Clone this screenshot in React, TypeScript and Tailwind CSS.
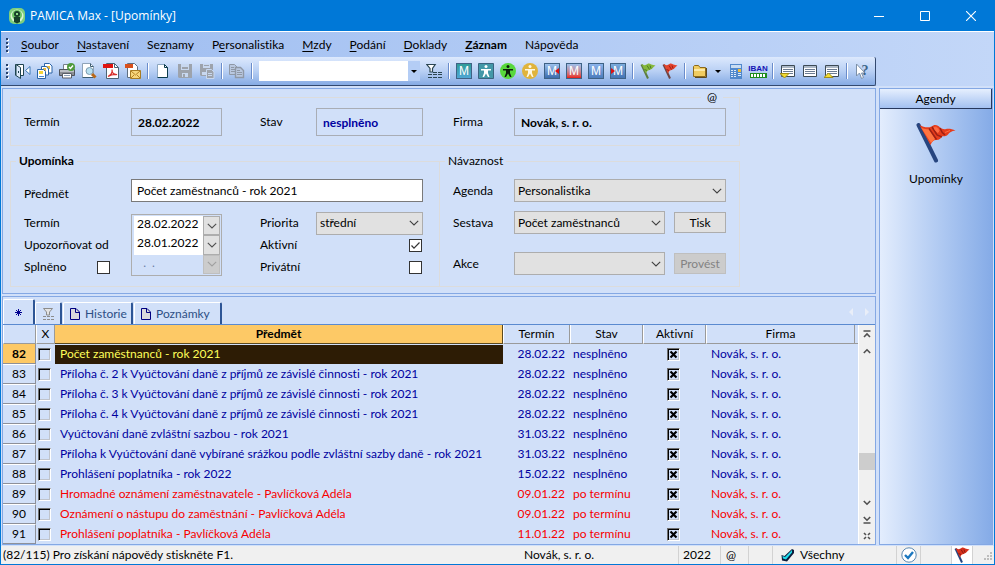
import type { ReactNode } from "react";

type MenuItem = { before?: string; key: string; after: string; bold?: boolean };

const menu: MenuItem[] = [
  { key: "S", after: "oubor" },
  { key: "N", after: "astavení" },
  { before: "Se", key: "z", after: "namy" },
  { before: "P", key: "e", after: "rsonalistika" },
  { key: "M", after: "zdy" },
  { key: "P", after: "odání" },
  { key: "D", after: "oklady" },
  { key: "Z", after: "áznam", bold: true },
  { before: "Náp", key: "o", after: "věda" },
];

type Row = { id: number; subject: string; date: string; late?: boolean };

const rows: Row[] = [
  { id: 82, subject: "Počet zaměstnanců - rok 2021", date: "28.02.22" },
  { id: 83, subject: "Příloha č. 2 k Vyúčtování daně z příjmů ze závislé činnosti - rok 2021", date: "28.02.22" },
  { id: 84, subject: "Příloha č. 3 k Vyúčtování daně z příjmů ze závislé činnosti - rok 2021", date: "28.02.22" },
  { id: 85, subject: "Příloha č. 4 k Vyúčtování daně z příjmů ze závislé činnosti - rok 2021", date: "28.02.22" },
  { id: 86, subject: "Vyúčtování daně zvláštní sazbou - rok 2021", date: "31.03.22" },
  { id: 87, subject: "Příloha k Vyúčtování daně vybírané srážkou podle zvláštní sazby daně - rok 2021", date: "31.03.22" },
  { id: 88, subject: "Prohlášení poplatníka - rok 2022", date: "15.02.22" },
  { id: 89, subject: "Hromadné oznámení zaměstnavatele - Pavlíčková Adéla", date: "09.01.22", late: true },
  { id: 90, subject: "Oznámení o nástupu do zaměstnání - Pavlíčková Adéla", date: "09.01.22", late: true },
  { id: 91, subject: "Prohlášení poplatníka - Pavlíčková Adéla", date: "11.01.22", late: true },
];

const Icon = ({ children }: { children: ReactNode }) => (
  <svg width="16" height="16" viewBox="0 0 16 16" fill="none" aria-hidden="true">
    {children}
  </svg>
);

const ExitIcon = () => (
  <Icon>
    <path d="M.5 12.500V1.500H8.500V12.500H6" fill="#fff" stroke="#1f4450" />
    <path d="M1 1.500L5.500 4.500V15.500L1 12.500z" fill="#dbe9fb" stroke="#1f4450" />
    <path d="M3.500 8v2" stroke="#1f4450" />
    <path d="M10.500 7.500L15 3.500V11.500z" fill="#fff" stroke="#3c78b4" />
  </Icon>
);

const SheetsIcon = () => (
  <Icon>
    <path d="M7.500.5h5l2.500 2.500v7h-7.500z" fill="#fff" stroke="#2a64a8" />
    <path d="M9 3h4v3H9z" fill="#e7b93c" />
    <path d="M4.500 3.500h5l2 2.500v6h-7z" fill="#fff" stroke="#2a64a8" />
    <path d="M6 5h3v3H6z" fill="#e7b93c" />
    <path d="M.5 6.500h6l2 2v7H.500z" fill="#fff" stroke="#2a64a8" />
    <path d="M2 8h4v3H2z" fill="#f5d438" />
    <path d="M2 13.500h5" stroke="#4c8bd0" />
  </Icon>
);

const PrinterIcon = () => (
  <Icon>
    <path d="M4.500 6V1.500h7V6" fill="#fff" stroke="#77808a" />
    <path d="M.5 6.500h15v6H.500z" fill="#8c8f95" stroke="#50545c" />
    <path d="M1 7h14v2H1z" fill="#bcc0c6" />
    <path d="M3.500 10.500h9v4.500h-9z" fill="#fff" stroke="#5a5f68" />
    <path d="M5 12.500h6" stroke="#8da0b8" />
    <circle cx="12" cy="4" r="4" fill="#4f9a3c" />
    <path d="M10 4l1.500 1.500L14 2.500" stroke="#fff" strokeWidth="1.400" />
  </Icon>
);

const PreviewIcon = () => (
  <Icon>
    <path d="M1.500.5h8l3 3v11h-11z" fill="#fff" stroke="#8fa3b8" />
    <path d="M9.500.5v3h3M1.500 14.500h11" stroke="#3c5c70" />
    <circle cx="8.500" cy="8" r="3.500" fill="#b8e0f0" stroke="#7d9bb0" />
    <path d="M11 11l3.500 3.500" stroke="#b86818" strokeWidth="3" />
  </Icon>
);

const PdfIcon = () => (
  <Icon>
    <path d="M3.500.5h8l4 4v11h-12z" fill="#fff" stroke="#4c6474" />
    <path d="M11.500.5v4h4" stroke="#4c6474" />
    <path d="M0 1h10v4H0z" fill="#e01410" />
    <path d="M5 13.500c3-1.500 4.500-4.500 4-7 0 3.500 2 5.500 5 5-3-.5-6 .2-9 2z" stroke="#d8302c" strokeWidth="1.200" />
  </Icon>
);

const MailPdfIcon = () => (
  <Icon>
    <path d="M2.500.5h7l3 3v11h-10z" fill="#fff" stroke="#5f6f80" />
    <path d="M0 1h8v4H0z" fill="#d8501c" />
    <path d="M5.500 7.500h10v8h-10z" fill="#f7d67c" stroke="#a87c24" />
    <path d="M6 8l4.500 4L15 8M6 15l3-3M15 15l-3-3" stroke="#b58224" />
  </Icon>
);

const NewIcon = () => (
  <Icon>
    <path d="M2.500 1.500h7l3 3v10h-10z" fill="#fff" stroke="#8ba6c0" />
    <path d="M9.500 1.500l3 3v10h-10" stroke="#0c3c4c" />
    <path d="M9.500 1.500v3h3" stroke="#0c3c4c" />
  </Icon>
);

const SaveIcon = () => (
  <Icon>
    <path d="M1 1h14v14H2l-1-1z" fill="#9da3ac" />
    <path d="M4 1h8v6H4z" fill="#c8d8f0" />
    <path d="M5 4h6v2H5z" fill="#9da3ac" />
    <path d="M5 10h6v4H5z" fill="#c8d8f0" />
    <path d="M6 11h2v3H6z" fill="#9da3ac" />
  </Icon>
);

const SaveAsIcon = () => (
  <Icon>
    <path d="M1 1h13v12H2l-1-1z" fill="#9da3ac" />
    <path d="M4 1h7v4H4z" fill="#c8d8f0" />
    <path d="M5 2.500h5" stroke="#9da3ac" />
    <path d="M3 9h4v3H3z" fill="#c8d8f0" />
    <path d="M7.500 6.500h5l2.500 2.500v6.500H7.500z" fill="#9da3ac" stroke="#c8d8f0" />
    <path d="M9 10.500h4M9 12.500h4" stroke="#c8d8f0" />
  </Icon>
);

const CopyIcon = () => (
  <Icon>
    <path d="M.5 1.500h5l3 3v7h-8z" fill="#b9c8e0" stroke="#8f98a6" />
    <path d="M2 4.500h3M2 6.500h4M2 8.500h4" stroke="#8f98a6" />
    <path d="M6.500 4.500h5l3 3v7h-8z" fill="#b9c8e0" stroke="#8f98a6" strokeWidth="1.400" />
    <path d="M8 7.500h3M8 9.500h5M8 11.500h5" stroke="#8f98a6" />
  </Icon>
);

const FilterIcon = () => (
  <Icon>
    <path d="M.8 1.500h8.400L6.500 5.500V9H4V5.500z" fill="#fff" stroke="#2b4652" strokeWidth="1.200" />
    <path d="M7 9.500h9M2 11.500h14M2 14.500h14" stroke="#2b4652" strokeDasharray="4 1" />
  </Icon>
);

const Person = ({ fill }: { fill: string }) => (
  <g fill={fill}>
    <circle cx="8" cy="3.500" r="1.500" />
    <path d="M3 6h10v1.500H10V10l1.500 4H10L8 10.500 6 14H4.500L6 10V7.500H3z" />
  </g>
);

const SquarePersonIcon = () => (
  <Icon>
    <path d="M.5.5h15v15H.500z" fill="#4398a8" stroke="#3b6480" />
    <Person fill="#fff" />
  </Icon>
);

const RoundPersonIcon = ({ bg, fill }: { bg: string; fill: string }) => (
  <Icon>
    <circle cx="8" cy="8" r="8" fill={bg} />
    <Person fill={fill} />
  </Icon>
);

const MBadge = ({ tone, side }: { tone: string; side?: "left" | "right" }) => (
  <span
    className={`relative flex size-4 items-center justify-center border border-[#3f6285] bg-linear-to-b font-['Liberation_Sans'] text-[12px] leading-none text-white ${tone}`}
  >
    M
    {side === "right" && (
      <svg className="absolute right-0 top-1" width="4" height="6" viewBox="0 0 4 6" aria-hidden="true">
        <path d="M4 0v6L0 3z" fill="#e01010" />
      </svg>
    )}
    {side === "left" && (
      <svg className="absolute left-0 top-1" width="4" height="6" viewBox="0 0 4 6" aria-hidden="true">
        <path d="M0 0v6l4-3z" fill="#e01010" />
      </svg>
    )}
  </span>
);

const SmallFlagIcon = ({ main, dark, pole }: { main: string; dark: string; pole: string }) => (
  <Icon>
    <path d="M1.500 1.500L8 15.500" stroke={pole} strokeWidth="2" />
    <path d="M1.500 1C4 2.500 5.500 2.500 7.500 1S11 2.500 15.500 2.500C13 4 12 6.500 9.500 7S7 8.500 6 10.500z" fill={main} />
    <path d="M7 2.500l2.500 4M10 2.500l1 3M4.500 6.500l2.500 1" stroke={dark} />
  </Icon>
);

const FolderIcon = () => (
  <Icon>
    <path d="M1.500 13.500v-10l1-1h4l1.500 2h5.500v9z" fill="#f0cc60" stroke="#8c6a1c" />
    <path d="M2 6h11v2H2z" fill="#fbe9a6" />
    <path d="M14.500 5v9.500H3" stroke="#5c4a20" />
  </Icon>
);

const CalculatorIcon = () => (
  <Icon>
    <path d="M2 1h12v15H2z" fill="#5088cc" />
    <path d="M3 2h10v3H3z" fill="#c8dcf2" />
    <path d="M3 7.500h6M3 9.500h6M3 11.500h6M3 13.500h6" stroke="#dbe9f8" strokeDasharray="2 1" />
    <path d="M10 6h3v3h-3z" fill="#eebc3c" />
    <path d="M10 10.500h3M10 12.500h3" stroke="#dbe9f8" />
  </Icon>
);

const ListIcon = ({ mark }: { mark?: "down" | "up" }) => (
  <Icon>
    <path d="M1.500 2.500h13v11h-13z" fill="#fff" stroke="#3c4a55" />
    <path d="M2 3h12v2H2z" fill="#aebac8" />
    <path d="M3 6.500h10M3 8.500h10M3 10.500h10" stroke="#6c7c92" />
    {mark === "down" && <path d="M0 10.500h9L4.500 15z" fill="#f4dc30" stroke="#a08c18" />}
    {mark === "up" && <path d="M0 14.500h9L4.500 10z" fill="#f4dc30" stroke="#a08c18" />}
  </Icon>
);

const HelpIcon = () => (
  <span className="flex items-start">
    <svg width="10" height="16" viewBox="0 0 10 16" aria-hidden="true">
      <path d="M.5 1v12L3.500 10l2 5.500 2-1-2-4.500H9z" fill="#fff" stroke="#7c90a8" />
    </svg>
    <span className="-ml-1 font-['Liberation_Serif'] text-[14px] leading-4 font-bold text-[#3c6488]">?</span>
  </span>
);

const Chevron = ({ color = "#404040" }: { color?: string }) => (
  <svg width="10" height="6" viewBox="0 0 10 6" fill="none" aria-hidden="true">
    <path d="M.8.8L5 5 9.200.800" stroke={color} strokeWidth="1.100" />
  </svg>
);

const Tool = ({ label, children }: { label: string; children: ReactNode }) => (
  <button type="button" aria-label={label} className="flex h-6 w-[22px] shrink-0 items-center justify-center">
    {children}
  </button>
);

const Separator = () => (
  <span className="flex h-4 w-2 shrink-0 justify-center">
    <span className="w-px bg-[#6a8ccb]" />
    <span className="w-px bg-white" />
  </span>
);

const Grip = () => (
  <svg width="4" height="16" viewBox="0 0 4 16" shapeRendering="crispEdges" aria-hidden="true">
    <path d="M3 2v14" stroke="#fff" strokeWidth="2" strokeDasharray="2 2" />
    <path d="M2 1v14" stroke="#27416b" strokeWidth="2" strokeDasharray="2 2" />
  </svg>
);

const TitleBar = () => (
  <header className="flex h-[31px] items-center bg-[#0078d7] pl-2 font-['Open_Sans'] text-white">
    <svg width="16" height="16" viewBox="0 0 16 16" aria-hidden="true">
      <rect width="16" height="16" rx="5" fill="#7fcf7c" />
      <circle cx="8" cy="8" r="6.500" fill="#d9f5d0" />
      <circle cx="8" cy="7" r="5" fill="#6cc466" />
      <circle cx="8" cy="6" r="3" fill="#17402a" />
      <path d="M5 9h6v5l-3 1.500L5 14z" fill="#17402a" />
      <path d="M7 5h2v2H7z" fill="#8fd88a" />
    </svg>
    <h1 className="flex-1 pl-[5px]">PAMICA Max - [Upomínky]</h1>
    <button type="button" aria-label="Minimalizovat" className="flex h-full w-[46px] items-center justify-center">
      <svg width="10" height="10" viewBox="0 0 10 10" aria-hidden="true">
        <path d="M0 5.500h10" stroke="#fff" />
      </svg>
    </button>
    <button type="button" aria-label="Maximalizovat" className="flex h-full w-[46px] items-center justify-center">
      <svg width="10" height="10" viewBox="0 0 10 10" fill="none" aria-hidden="true">
        <path d="M.5.5h9v9h-9z" stroke="#fff" />
      </svg>
    </button>
    <button type="button" aria-label="Zavřít" className="flex h-full w-[46px] items-center justify-center">
      <svg width="10" height="10" viewBox="0 0 10 10" aria-hidden="true">
        <path d="M0 0l10 10M10 0L0 10" stroke="#fff" strokeWidth="1.100" />
      </svg>
    </button>
  </header>
);

const MenuBar = () => (
  <nav className="flex h-[25px] items-center pl-1">
    <Grip />
    <div className="flex gap-[18px] pl-3">
      {menu.map((m) => (
        <button type="button" key={m.key + m.after} className={m.bold ? "font-bold" : ""}>
          {m.before}
          <u className="underline-offset-2">{m.key}</u>
          {m.after}
        </button>
      ))}
    </div>
  </nav>
);

const Toolbar = () => (
  <div className="mr-[118px] flex h-[29px] items-center rounded-r-xs border-b border-r border-[#33496f] bg-linear-to-b from-[#dde9fd] via-[#b9d0f4] to-[#86abe4] pl-1">
    <Grip />
    <div className="flex min-w-0 items-center pl-[3px]">
      <Tool label="Konec"><ExitIcon /></Tool>
      <Tool label="Agendy"><SheetsIcon /></Tool>
      <Tool label="Tisk"><PrinterIcon /></Tool>
      <Tool label="Náhled"><PreviewIcon /></Tool>
      <Tool label="PDF"><PdfIcon /></Tool>
      <Tool label="Odeslat PDF"><MailPdfIcon /></Tool>
      <Separator />
      <Tool label="Nový"><NewIcon /></Tool>
      <Tool label="Uložit"><SaveIcon /></Tool>
      <Tool label="Uložit kopii"><SaveAsIcon /></Tool>
      <Separator />
      <Tool label="Kopírovat"><CopyIcon /></Tool>
      <Separator />
      <div className="mx-[3px] flex h-5 w-[161px] bg-white">
        <input aria-label="Hledat" className="w-full min-w-0 flex-1 px-1 outline-none" />
        <button type="button" aria-label="Historie hledání" className="flex w-3 items-center justify-center bg-[#b4cdf5]">
          <svg width="6" height="3" viewBox="0 0 6 3" aria-hidden="true">
            <path d="M0 0h6L3 3z" />
          </svg>
        </button>
      </div>
      <Tool label="Filtr"><FilterIcon /></Tool>
      <Separator />
      <Tool label="Mzdy"><MBadge tone="from-[#2f9c98] to-[#4fa6d4]" /></Tool>
      <Tool label="Osoby"><SquarePersonIcon /></Tool>
      <Tool label="Aktivní osoby"><RoundPersonIcon bg="#58d83c" fill="#0c1c0c" /></Tool>
      <Tool label="Ostatní osoby"><RoundPersonIcon bg="#e0b43c" fill="#fff8e0" /></Tool>
      <Tool label="Předchozí mzdy"><MBadge tone="from-[#9cc0ec] to-[#3c6cac]" side="right" /></Tool>
      <Tool label="Uzavřené mzdy"><MBadge tone="from-[#9cc0ec] via-[#c08c9c] to-[#e81010]" /></Tool>
      <Tool label="Měsíční mzdy"><MBadge tone="from-[#8cb4ec] to-[#4c7cbc]" /></Tool>
      <Tool label="Další mzdy"><MBadge tone="from-[#7cacdc] to-[#4474b4]" side="left" /></Tool>
      <Separator />
      <Tool label="Zelená vlajka"><SmallFlagIcon main="#86b83c" dark="#4c7c24" pole="#5c7c40" /></Tool>
      <Tool label="Červená vlajka"><SmallFlagIcon main="#e4442c" dark="#9c1c14" pole="#6c4444" /></Tool>
      <Separator />
      <Tool label="Složka"><FolderIcon /></Tool>
      <button type="button" aria-label="Další složky" className="flex h-6 w-3.5 items-center justify-center">
        <svg width="6" height="3" viewBox="0 0 6 3" aria-hidden="true">
          <path d="M0 0h6L3 3z" />
        </svg>
      </button>
      <Tool label="Kalkulačka"><CalculatorIcon /></Tool>
      <Tool label="IBAN">
        <span className="flex flex-col items-center">
          <span className="font-['Liberation_Sans'] text-[8px] leading-2 font-bold text-[#1414b4]">IBAN</span>
          <svg width="17" height="5" viewBox="0 0 17 5" shapeRendering="crispEdges" aria-hidden="true">
            <path d="M0 0h17v5H0z" fill="#1c8c1c" />
            <path d="M1 2.500h15" stroke="#fff" strokeWidth="3" strokeDasharray="2 1" />
          </svg>
        </span>
      </Tool>
      <Separator />
      <Tool label="Seznam dolů"><ListIcon mark="down" /></Tool>
      <Tool label="Seznam"><ListIcon /></Tool>
      <Tool label="Seznam nahoru"><ListIcon mark="up" /></Tool>
      <Separator />
      <Tool label="Nápověda"><HelpIcon /></Tool>
    </div>
  </div>
);

type SelectProps = { id: string; value?: string; width: string };

const Select = ({ id, value = "", width }: SelectProps) => (
  <div className={`relative h-[23px] ${width}`}>
    <select
      id={id}
      defaultValue={value}
      className="h-full w-full appearance-none border border-[#adadad] bg-[#e1e1e1] pl-[3px] outline-none"
    >
      <option>{value}</option>
    </select>
    <span className="pointer-events-none absolute inset-y-0 right-1 flex items-center">
      <Chevron />
    </span>
  </div>
);

const DateRow = ({ id, value, disabled }: { id: string; value: string; disabled?: boolean }) => (
  <div className="flex min-h-0 flex-1">
    <input
      id={id}
      defaultValue={value}
      disabled={disabled}
      className={`w-full min-w-0 flex-1 pb-[3px] pl-[3px] outline-none ${
        disabled ? "bg-transparent text-[#6b7fa6]" : "bg-white"
      }`}
    />
    <button
      type="button"
      aria-label="Vybrat datum"
      disabled={disabled}
      className={`flex w-[17px] items-center justify-center border ${
        disabled ? "border-[#bfbfbf] bg-[#cccccc]" : "border-[#adadad] bg-[#e1e1e1]"
      }`}
    >
      <Chevron color={disabled ? "#a0a0a0" : "#505050"} />
    </button>
  </div>
);

const Check = ({ id, checked }: { id: string; checked?: boolean }) => (
  <span className="relative flex size-[13px]">
    <input
      id={id}
      type="checkbox"
      defaultChecked={checked}
      className="peer size-[13px] appearance-none border border-[#333] bg-white"
    />
    <svg
      className="pointer-events-none absolute inset-0 hidden peer-checked:block"
      width="13"
      height="13"
      viewBox="0 0 13 13"
      fill="none"
      aria-hidden="true"
    >
      <path d="M2.500 6.500L5 9.200 10.500 3.500" stroke="#333" strokeWidth="1.200" />
    </svg>
  </span>
);

const readonlyField = "h-7 w-full border border-[#a9adb5] bg-transparent pl-1.5 font-bold outline-none";
const group = "border border-[#dcdcdc]";

const ReminderForm = () => (
  <form className="h-[206px] border border-[#84a8e4] bg-[#d1e0f9] pl-[7px]">
    <fieldset className={`${group} w-[730px] px-[13px] pb-[9px]`}>
      <legend className="ml-auto mr-[3px] h-4 px-1.5">@</legend>
      <div className="grid grid-cols-[107px_91px_38px_56px_107px_30px_61px_1fr] items-center pt-[3px]">
        <label htmlFor="head-date">Termín</label>
        <input id="head-date" readOnly defaultValue="28.02.2022" className={readonlyField} />
        <span />
        <label htmlFor="head-state">Stav</label>
        <input id="head-state" readOnly defaultValue="nesplněno" className={`${readonlyField} text-[#0000a0]`} />
        <span />
        <label htmlFor="head-company">Firma</label>
        <input id="head-company" readOnly defaultValue="Novák, s. r. o." className={readonlyField} />
      </div>
    </fieldset>

    <div className="mt-[7px] flex w-[730px]">
      <fieldset className={`${group} w-[430px] pb-2 pl-[13px] pr-4`}>
        <legend className="-ml-2 h-4 px-[3px] font-bold">Upomínka</legend>
        <div className="flex h-[34px] items-end pb-px">
          <label htmlFor="subject" className="w-[107px]">Předmět</label>
          <input
            id="subject"
            defaultValue="Počet zaměstnanců - rok 2021"
            className="h-[23px] flex-1 border border-[#7a7a7a] bg-white pl-[5px] outline-none"
          />
        </div>
        <div className="flex items-center pt-[9px]">
          <div className="grid w-[107px] grid-rows-[22px_22px_22px] items-center">
            <label htmlFor="date-due">Termín</label>
            <label htmlFor="date-warn">Upozorňovat od</label>
            <div className="flex items-center justify-between pr-[21px]">
              <label htmlFor="done">Splněno</label>
              <Check id="done" />
            </div>
          </div>
          <div className="flex h-[62px] w-[91px] flex-col border border-[#adadad] p-px pl-0.5">
            <DateRow id="date-due" value="28.02.2022" />
            <DateRow id="date-warn" value="28.01.2022" />
            <DateRow id="date-done" value="  .  ." disabled />
          </div>
          <div className="ml-[38px] grid flex-1 grid-rows-[22px_22px_22px] items-center">
            <div className="flex items-center">
              <label htmlFor="priority" className="w-14">Priorita</label>
              <Select id="priority" value="střední" width="flex-1" />
            </div>
            <div className="flex items-center justify-between pr-px">
              <label htmlFor="active">Aktivní</label>
              <Check id="active" checked />
            </div>
            <div className="flex items-center justify-between pr-px">
              <label htmlFor="private">Privátní</label>
              <Check id="private" />
            </div>
          </div>
        </div>
      </fieldset>

      <fieldset className={`${group} -ml-px flex-1 px-[13px]`}>
        <legend className="-ml-2 h-4 px-[3px]">Návaznost</legend>
        <div className="flex flex-col gap-[9px] pt-2.5">
          <div className="flex items-center">
            <label htmlFor="agenda" className="w-[61px]">Agenda</label>
            <Select id="agenda" value="Personalistika" width="flex-1" />
          </div>
          <div className="flex items-center">
            <label htmlFor="report" className="w-[61px]">Sestava</label>
            <Select id="report" value="Počet zaměstnanců" width="flex-1" />
            <button type="button" className="ml-[9px] h-[21px] w-[52px] border border-[#adadad] bg-[#e1e1e1]">
              Tisk
            </button>
          </div>
          <div className="flex items-center pt-[9px]">
            <label htmlFor="action" className="w-[61px]">Akce</label>
            <Select id="action" width="flex-1" />
            <button
              type="button"
              disabled
              className="ml-[9px] h-[21px] w-[52px] border border-[#bfbfbf] bg-[#cccccc] text-[#838383]"
            >
              Provést
            </button>
          </div>
        </div>
      </fieldset>
    </div>
  </form>
);

const PageGlyph = () => (
  <svg width="10" height="12" viewBox="0 0 10 12" aria-hidden="true">
    <path d="M.5.5h5.500l3.500 3.500v7.500h-9z" fill="#d8d8dc" stroke="#000080" />
    <path d="M5.500.5V4.500H9.500" fill="none" stroke="#000080" />
  </svg>
);

const tab =
  "flex items-center rounded-t-xs border-l border-t border-r-2 border-l-white border-t-white border-r-[#2d5596] text-[#2d4f85]";

const Tabs = () => (
  <div className="flex h-7 items-end border-b border-[#5a8ad0]">
    <button type="button" aria-label="Záznam" className={`${tab} h-[25px] w-8 justify-center`}>
      <svg width="7" height="7" viewBox="0 0 7 7" aria-hidden="true">
        <path d="M3.500 0v7M0 3.500h7M1 1l5 5M6 1L1 6" stroke="#000090" />
      </svg>
    </button>
    <button type="button" aria-label="Filtr" className={`${tab} h-[22px] w-[27px] justify-center`}>
      <svg width="13" height="12" viewBox="0 0 13 12" fill="none" aria-hidden="true">
        <path d="M1.500.5h9L7.500 4v3h-3V4z" fill="#e4e4e4" stroke="#8c8c8c" />
        <path d="M1 8.500h11M1 11.500h11" stroke="#8c8c8c" strokeDasharray="3 1" />
      </svg>
    </button>
    <button type="button" className={`${tab} ml-px h-[22px] w-[70px] gap-[5px] pl-1.5`}>
      <PageGlyph />
      Historie
    </button>
    <button type="button" className={`${tab} ml-px h-[22px] w-[88px] gap-[5px] pl-1.5`}>
      <PageGlyph />
      Poznámky
    </button>
    <svg className="mb-2 ml-auto mr-1.5" width="20" height="8" viewBox="0 0 20 8" aria-hidden="true">
      <path d="M4 0v8L0 4zM16 0v8l4-4z" fill="#e9eef8" />
    </svg>
  </div>
);

const head = "border-b border-r border-[#9a9a9a] border-l border-l-white p-0 font-normal";
const sunken =
  "block size-[13px] appearance-none border border-b-white border-l-[#707070] border-r-white border-t-[#707070] shadow-[inset_1px_1px_#000,inset_-1px_-1px_#c0c4cc]";

const RecordTable = () => (
  <table className="min-w-0 flex-1 table-fixed border-separate border-spacing-0">
    <colgroup>
      <col className="w-[33px]" />
      <col className="w-[19px]" />
      <col />
      <col className="w-[67px]" />
      <col className="w-[73px]" />
      <col className="w-[63px]" />
      <col className="w-[149px]" />
      <col className="w-[3px]" />
    </colgroup>
    <thead>
      <tr className="h-[19px]">
        <th className={head} aria-label="Pořadí" />
        <th className={head}>X</th>
        <th className="border-b border-r border-[#5c4a20] bg-[#fdc966] p-0 font-bold">Předmět</th>
        <th className={head}>Termín</th>
        <th className={head}>Stav</th>
        <th className={head}>Aktivní</th>
        <th className={head}>Firma</th>
        <th className="border-b border-[#9a9a9a] p-0" aria-label="Konec" />
      </tr>
    </thead>
    <tbody>
      {rows.map((r, i) => (
        <tr key={r.id} className={`h-5 ${r.late ? "text-[#f80000]" : "text-[#0000a0]"}`}>
          <th
            className={`border-b border-r border-[#8d9099] p-0 text-black ${
              i === 0 ? "bg-[#fdc966] font-bold" : "border-t border-t-white font-normal"
            }`}
          >
            {r.id}
          </th>
          <td className="p-0 pl-0.5">
            <input type="checkbox" aria-label={`Označit ${r.id}`} className={sunken} />
          </td>
          <td className="p-0">
            <div className={`flex h-[19px] items-center pl-[5px] whitespace-nowrap ${i === 0 ? "bg-[#2d1c05] text-[#ffff5a]" : ""}`}>
              {r.subject}
            </div>
          </td>
          <td className="p-0 pr-[5px] text-right">{r.date}</td>
          <td className="p-0 pl-[3px]">{r.late ? "po termínu" : "nesplněno"}</td>
          <td className="p-0">
            <span className="relative mx-auto block w-4">
              <input type="checkbox" defaultChecked aria-label={`Aktivní ${r.id}`} className={sunken} />
              <svg className="pointer-events-none absolute inset-0" width="13" height="13" viewBox="0 0 13 13" aria-hidden="true">
                <path d="M3.500 3.500l6 6M9.500 3.500l-6 6" stroke="#000" strokeWidth="2.200" />
              </svg>
            </span>
          </td>
          <td className="p-0 pl-[5px]">Novák, s. r. o.</td>
          <td className="p-0" />
        </tr>
      ))}
    </tbody>
  </table>
);

const ScrollGlyph = ({ d }: { d: string }) => (
  <svg width="8" height="8" viewBox="0 0 8 8" fill="none" aria-hidden="true">
    <path d={d} stroke="#505050" strokeWidth="1.600" />
  </svg>
);

const ScrollBar = () => (
  <div className="flex w-[17px] flex-col items-center border-l border-white bg-[#f0f0f0]">
    <button type="button" aria-label="Na začátek" className="flex h-[17px] items-center">
      <ScrollGlyph d="M.5 1h7M1 7l3-3 3 3" />
    </button>
    <button type="button" aria-label="Nahoru" className="flex h-[18px] items-center">
      <ScrollGlyph d="M.8 6L4 2.800 7.200 6" />
    </button>
    <div className="h-[93px]" />
    <div className="h-[17px] w-full bg-[#cdcdcd]" />
    <div className="flex-1" />
    <button type="button" aria-label="Dolů" className="flex h-[18px] items-center">
      <ScrollGlyph d="M.8 2L4 5.200 7.200 2" />
    </button>
    <button type="button" aria-label="Na konec" className="flex h-4 items-center">
      <ScrollGlyph d="M.8 1L4 4.200 7.200 1M.5 7h7" />
    </button>
    <button type="button" aria-label="Výběr" className="flex h-4 items-center">
      <ScrollGlyph d="M1 1l2 2M7 1L5 3M1 7l2-2M7 7L5 5" />
    </button>
  </div>
);

const Sidebar = () => (
  <aside className="flex w-[114px] flex-col border border-[#84a8e4] bg-linear-to-r from-[#e3edfd] to-[#85abe7]">
    <button type="button" className="h-5 border-b border-r border-[#27385c] bg-linear-to-b from-[#e6effe] to-[#a3c1f0]">
      Agendy
    </button>
    <a href="#upominky" className="flex flex-col items-center gap-2 pt-3.5">
      <svg width="40" height="40" viewBox="0 0 40 40" aria-hidden="true">
        <path d="M2.500 2L20 37.500" stroke="#27457f" strokeWidth="4" strokeLinecap="round" />
        <path d="M3.500 2C8 4.500 12 5 15.500 3.500 18 1 22 1.500 24 4.500c2 1.500 4 2 6 1.500 3-.5 6 0 9.500 1.500-4 .5-6 2-7.500 4-2 2.500-4.500 1.500-6.500 2-.5 2.500-3 4-5.500 3.500-2.500 0-4 1.500-5.500 5z" fill="#e63c1c" />
        <path d="M5 4.500c3 1.500 5 2 8 1.500l6 10-4 4z" fill="#ff7440" />
        <path d="M13 5.500l7.500 11M16 4l5 8 5 2M24 5c1 3 2 5 5 7" fill="none" stroke="#9c2015" strokeWidth="1.500" />
        <path d="M18 4.500c2-1 4 0 5 3l-1 2c-2-1-3-2.500-4-5zM29 9.500l5-2" fill="#ff6c44" stroke="#ff6c44" />
      </svg>
      Upomínky
    </a>
  </aside>
);

const cell = "flex h-full items-center border-l border-[#d2d2d2]";

const StatusBar = () => (
  <footer className="flex h-[18px] items-center bg-[#f0f0f0] whitespace-nowrap">
    <span className="flex-1 pl-0.5">(82/115) Pro získání nápovědy stiskněte F1.</span>
    <span className="w-[154px]">Novák, s. r. o.</span>
    <span className={`${cell} w-[42px] pl-1`}>2022</span>
    <span className={`${cell} w-7 pl-[5px]`}>@</span>
    <span className={`${cell} w-6`} />
    <span className={`${cell} w-[124px] gap-1.5 pl-2`}>
      <svg width="13" height="14" viewBox="0 0 13 14" aria-hidden="true">
        <path d="M.5 7l3 1 7.500-7 2 1v3L6 13.500 1 12.500z" fill="#0c1c3c" />
        <path d="M1.500 8L4 9l7-7v2.500l-6 7-3-1z" fill="#20dcec" />
      </svg>
      Všechny
    </span>
    <span className={`${cell} w-6 justify-center`}>
      <svg width="16" height="16" viewBox="0 0 16 16" fill="none" aria-hidden="true">
        <circle cx="8" cy="8" r="7.200" fill="#fff" stroke="#5c88b0" />
        <path d="M4 8l3 3 5-6" stroke="#1c78c0" strokeWidth="2.400" />
      </svg>
    </span>
    <span className={`${cell} w-[31px]`} />
    <span className={`${cell} w-[21px] justify-center bg-white`}>
      <SmallFlagIcon main="#d8301c" dark="#8c1810" pole="#27457f" />
    </span>
    <span className={`${cell} w-[22px] items-end justify-end pb-0.5`}>
      <svg width="10" height="10" viewBox="0 0 10 10" fill="#bdbdbd" aria-hidden="true">
        <path d="M6 0h2v2H6zM3 3h2v2H3zM6 3h2v2H6zM0 6h2v2H0zM3 6h2v2H3zM6 6h2v2H6z" />
      </svg>
    </span>
  </footer>
);

const App = () => (
  <div className="flex min-h-screen flex-col border-x border-b border-[#0078d7] bg-[#d1e0f9] font-[Lato,'Open_Sans',sans-serif] text-[12px] leading-4 text-black [font-variant-ligatures:none]">
    <TitleBar />
    <div className="border-t border-white bg-linear-to-r from-[#9dbcf0] to-[#c3d7f8]">
      <MenuBar />
      <Toolbar />
    </div>
    <main className="flex flex-1 gap-[3px] pb-px pl-px pt-0.5 pr-px">
      <div className="flex min-w-0 flex-1 flex-col gap-0.5">
        <ReminderForm />
        <section className="flex flex-1 flex-col border border-[#84a8e4]">
          <Tabs />
          <div className="flex flex-1 items-stretch">
            <RecordTable />
            <ScrollBar />
          </div>
        </section>
      </div>
      <Sidebar />
    </main>
    <StatusBar />
  </div>
);

export default App;
